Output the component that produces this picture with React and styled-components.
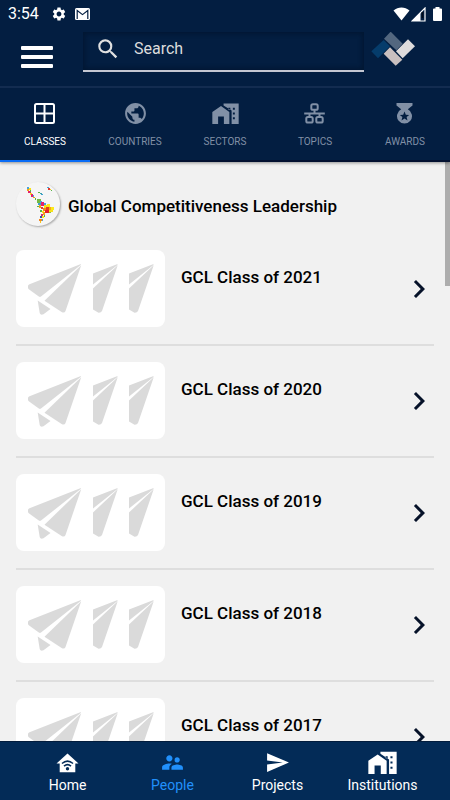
import styled, { createGlobalStyle } from "styled-components";
import { useState } from "react";
import {
  MdChevronRight,
  MdPublic,
  MdSearch,
  MdSend,
  MdSettings,
  MdSupervisorAccount,
} from "react-icons/md";

const GlobalStyle = createGlobalStyle`
  * {
    box-sizing: border-box;
  }
  body {
    margin: 0;
    font-family: Roboto, "Liberation Sans", sans-serif;
    background-color: #f1f1f1;
  }
  button {
    font-family: inherit;
    background: none;
    border: none;
    padding: 0;
    cursor: pointer;
  }
  svg {
    display: block;
    flex-shrink: 0;
  }
`;

const Screen = styled.div`
  height: 100vh;
  display: flex;
  flex-direction: column;
  overflow: hidden;
`;

const Top = styled.div`
  background-color: #031e41;
  color: white;
  position: relative;
  z-index: 1;
  box-shadow: 0 1px 3px rgba(0, 0, 0, 0.4);
`;

const StatusBar = styled.div`
  height: 28px;
  display: flex;
  align-items: center;
  padding: 0 8px;
  gap: 8px;
`;

const Clock = styled.span`
  font-size: 16px;
  line-height: 20px;
  margin-right: 4px;
`;

const Signals = styled.div`
  display: flex;
  align-items: center;
  gap: 1px;
  margin-left: auto;
`;

const Header = styled.header`
  display: flex;
  align-items: flex-start;
  padding: 4px 32px 14px 21px;
  border-bottom: 2px solid #132c50;
`;

const MenuButton = styled.button`
  width: 32px;
  margin-top: 14px;
  display: flex;
  flex-direction: column;
  gap: 5px;
`;

const Bar = styled.span`
  height: 4px;
  width: 100%;
  border-radius: 1px;
  background-color: white;
`;

const SearchBox = styled.label`
  flex: 1;
  min-width: 0;
  height: 40px;
  margin: 0 7px 0 30px;
  padding: 0 12px 4px;
  display: flex;
  align-items: center;
  gap: 13px;
  color: #e0e0e0;
  border-bottom: 2px solid #c4c7d2;
  box-shadow: inset 0 0 4px 2px #021733;
`;

const SearchInput = styled.input`
  flex: 1;
  min-width: 0;
  padding: 0;
  border: none;
  outline: none;
  background: none;
  color: inherit;
  font-family: inherit;
  font-size: 16px;
  line-height: 20px;
  &::placeholder {
    color: #dcdcdc;
    opacity: 1;
  }
`;

const Tabs = styled.div`
  display: flex;
`;

const Tab = styled.button`
  flex: 1 1 0;
  min-width: 0;
  height: 74px;
  display: flex;
  flex-direction: column;
  align-items: center;
  padding-top: 13px;
  gap: 9px;
  font-size: 10px;
  line-height: 14px;
  color: ${(props) => (props.$active ? "white" : "#8190a6")};
  border-bottom: 2px solid ${(props) => (props.$active ? "#0a6cf5" : "#031131")};
`;

const Main = styled.main`
  flex: 1;
  min-height: 0;
  position: relative;
`;

const Scroller = styled.div`
  height: 100%;
  overflow-y: auto;
  padding: 20px 16px 0;
  scrollbar-width: none;
`;

const ScrollThumb = styled.div`
  position: absolute;
  top: 0;
  right: 0;
  width: 5px;
  height: 124px;
  background-color: #adadad;
`;

const Group = styled.div`
  display: flex;
  align-items: center;
  gap: 8px;
  margin-bottom: 8px;
`;

const GroupTitle = styled.h1`
  margin: 0;
  padding-top: 3px;
  font-size: 17px;
  line-height: 20px;
  font-weight: 500;
  color: #000;
`;

const Avatar = styled.span`
  width: 44px;
  height: 44px;
  border-radius: 50%;
  background-color: #f5f5f5;
  box-shadow: 1px 1px 2px rgba(0, 0, 0, 0.3);
`;

const List = styled.ul`
  list-style: none;
  margin: 0;
  padding: 0;
`;

const Item = styled.li`
  border-bottom: 2px solid #dedede;
`;

const ItemLink = styled.a`
  display: flex;
  align-items: center;
  gap: 16px;
  padding: 16px 0 17px;
  color: #000;
  text-decoration: none;
`;

const Thumb = styled.span`
  width: 149px;
  height: 77px;
  border-radius: 8px;
  background-color: white;
  flex-shrink: 0;
`;

const ItemName = styled.span`
  flex: 1;
  align-self: flex-start;
  padding-top: 15px;
  font-size: 17px;
  line-height: 24px;
  font-weight: 500;
`;

const Chevron = styled(MdChevronRight)`
  color: #061229;
  margin-right: -3px;
`;

const BottomNav = styled.nav`
  display: flex;
  padding: 0 15px;
  height: 59px;
  background-color: #032b57;
  border-top: 1px solid #021c3c;
`;

const NavLink = styled.a`
  flex: 1 1 0;
  display: flex;
  flex-direction: column;
  align-items: center;
  padding-top: 8px;
  font-size: 14px;
  line-height: 20px;
  text-decoration: none;
  color: ${(props) => (props.$active ? "#2190fb" : "white")};
`;

const MailIcon = () => (
  <svg width="15" height="12" viewBox="0 0 15 12">
    <rect width="15" height="12" rx="1.5" fill="#fff" />
    <path d="M2.2 11V2.5L7.5 6.6L12.8 2.5V11" fill="none" stroke="#031e41" strokeWidth="1.2" />
  </svg>
);

const WifiIcon = () => (
  <svg width="17" height="14" viewBox="0 0 16 14" fill="#fff">
    <path d="M0 3.6C4.6-.6 11.4-.6 16 3.6L8 13.6Z" />
  </svg>
);

const SignalIcon = () => (
  <svg width="15" height="15" viewBox="0 0 15 15">
    <path d="M14 1V14H1Z" fill="none" stroke="#fff" strokeWidth="1.2" />
    <path d="M9.5 5.5V14H1Z" fill="#fff" />
    <path d="M11.5 5V11" stroke="#020a18" strokeWidth="1.6" />
  </svg>
);

const BatteryIcon = () => (
  <svg width="15" height="14" viewBox="-6 0 15 14" fill="#fff">
    <path d="M2.5 0H6.5V1.5H8Q9 1.5 9 2.5V13Q9 14 8 14H1Q0 14 0 13V2.5Q0 1.5 1 1.5H2.5Z" />
  </svg>
);

const BrandLogo = () => (
  <svg width="47" height="37" viewBox="438 95 141 111">
    <path d="M439 153L476 119L495 138L459 174Z" fill="#053c6b" />
    <path d="M497 94L533 130L514 150L477 115Z" fill="#53677f" />
    <path d="M495 141L532 178L512 196L476 160Z" fill="#c9c0c0" />
    <path d="M549 117L570 138L533 174L513 153Z" fill="#dedbdb" />
  </svg>
);

const GridIcon = () => (
  <svg width="27" height="25" viewBox="0 0 27 25" fill="none" stroke="currentColor" strokeWidth="2">
    <rect x="3" y="3" width="19" height="19" rx="1.5" />
    <path d="M12.5 3V22M3 12.5H22" />
  </svg>
);

const TopicsIcon = () => (
  <svg width="27" height="25" viewBox="0 0 27 25" fill="none" stroke="currentColor" strokeWidth="2">
    <rect x="9.3" y="3.2" width="6.4" height="5.6" rx="1.6" />
    <rect x="4.3" y="16" width="6.4" height="5.6" rx="1.6" />
    <rect x="14.3" y="16" width="6.4" height="5.6" rx="1.6" />
    <path d="M12.5 9V12.5M2.2 12.5H22.8M7.5 12.5V16M17.5 12.5V16" />
  </svg>
);

const MedalIcon = () => (
  <svg width="27" height="25" viewBox="0 0 27 25" fill="currentColor">
    <path
      d="M4.5 2H20.5V4.5L15.8 8.3A7.5 7.5 0 1 1 9.2 8.3L4.5 4.5ZM12.5 10.4L11.2 13.7L7.8 13.9L10.4 16.1L9.5 19.4L12.5 17.6L15.5 19.4L14.6 16.1L17.2 13.9L13.8 13.7Z"
      fillRule="evenodd"
    />
  </svg>
);

const HomeCityIcon = ({ width, height }) => (
  <svg width={width} height={height} viewBox="-1 -4 84 70" fill="currentColor">
    <path d="M0 64V26L27 8L53 26V64H36V40H18V64Z" />
    <path
      d="M35 0H82V64H60V22L35 6ZM50 13V19H56V13ZM64 13V19H70V13ZM64 28V34H70V28ZM64 43V49H70V43Z"
      fillRule="evenodd"
    />
  </svg>
);

const HomeWifiIcon = () => (
  <svg width="25" height="25" viewBox="0 0 25 25">
    <path d="M12.5 3.5L23.5 13.5H20.3V22.3H4.7V13.5H1.5Z" fill="currentColor" />
    <g fill="none" stroke="#032b57" strokeWidth="1.6">
      <path d="M7 13.5Q12.5 8.8 18 13.5" />
      <path d="M9 16.2Q12.5 13.2 16 16.2" />
    </g>
    <circle cx="12.5" cy="18.8" r="1.7" fill="#032b57" />
  </svg>
);

const half =
  "M77 23.5L101 14.3Q102 14.2 101.5 15L77 34.5ZM77 38.5L101.7 15.2L86 61Q85 63 82.5 62.8L77 59.5Z";

const PlanesIcon = () => (
  <svg width="149" height="77" viewBox="0 0 149 77" fill="#dadada">
    <path d="M13.5 34.2L64.3 14.2Q65.5 14 64.7 15L25 46.5Q24 47.3 22.8 46.5L12.8 39.2Q12 38.5 12 37.5V36Q12 35 13.5 34.2Z" />
    <path d="M65.2 15.2L49.5 61Q48.5 63.3 46 62.3L28.5 50.7Z" />
    <path d="M21.7 50.5L34.5 59L27.5 64.3Q24.5 65.5 23.7 63Z" />
    <path d={half} />
    <path d={half} transform="translate(36 0)" />
  </svg>
);

// x, y, width, height, colour of each tile of the map
const tiles = [
  [11, 5, 2, 2, "#4aa3d8"], [13, 6, 2, 2, "#f6e21a"], [11, 7, 2, 2, "#f3a01c"],
  [12, 9, 3, 2, "#e4206c"], [14, 8, 1, 2, "#58b548"], [14, 11, 2, 2, "#f6e21a"],
  [15, 12, 2, 3, "#e4206c"], [17, 13, 1, 2, "#4aa3d8"], [17, 15, 2, 1, "#f3a01c"],
  [19, 16, 1, 2, "#58b548"], [22, 10, 2, 1, "#58b548"], [24, 11, 2, 1, "#39a0a8"],
  [25, 12, 2, 1, "#3ba0cf"], [31, 5, 2, 1, "#4aa3d8"], [32, 6, 2, 2, "#e23a2e"],
  [34, 7, 1, 1, "#f6c81a"], [35, 8, 1, 1, "#58b548"],
  [21, 17, 4, 4, "#75b843"], [24, 19, 2, 2, "#4aa3d8"], [22, 21, 3, 2, "#3ba0cf"],
  [25, 20, 3, 4, "#e4206c"], [23, 23, 2, 3, "#f3a01c"], [28, 21, 2, 2, "#4aa3d8"],
  [21, 24, 2, 1, "#58b548"], [28, 23, 3, 3, "#f6e21a"], [31, 22, 3, 3, "#fbe91a"],
  [33, 25, 2, 3, "#f6a81a"], [35, 25, 3, 3, "#fbe91a"], [30, 25, 3, 3, "#e4401c"],
  [27, 26, 3, 3, "#f3871c"], [25, 25, 2, 2, "#e23a2e"], [24, 28, 2, 2, "#58b548"],
  [29, 28, 4, 3, "#e4202c"], [33, 28, 4, 2, "#f6e21a"], [26, 29, 2, 2, "#fbe91a"],
  [33, 30, 2, 1, "#8bbf3d"], [25, 32, 2, 2, "#d8306c"], [27, 30, 2, 3, "#f3a01c"],
  [24, 34, 2, 2, "#3457a8"], [26, 34, 2, 2, "#fbe91a"], [28, 33, 1, 2, "#58b548"],
  [23, 37, 3, 2, "#f3871c"], [24, 39, 1, 2, "#f6c81a"], [26, 37, 1, 2, "#4aa3d8"],
];

const MapIcon = () => (
  <svg width="44" height="44" viewBox="0 0 44 44">
    {tiles.map(([x, y, w, h, color]) => (
      <rect key={`${x}-${y}`} x={x} y={y} width={w} height={h} fill={color} />
    ))}
  </svg>
);

const tabs = [
  { name: "CLASSES", icon: <GridIcon /> },
  { name: "COUNTRIES", icon: <MdPublic size={25} /> },
  { name: "SECTORS", icon: <HomeCityIcon width={27} height={25} /> },
  { name: "TOPICS", icon: <TopicsIcon /> },
  { name: "AWARDS", icon: <MedalIcon /> },
];

const years = [2021, 2020, 2019, 2018, 2017];

const pages = [
  { name: "Home", icon: <HomeWifiIcon /> },
  { name: "People", icon: <MdSupervisorAccount size={25} /> },
  { name: "Projects", icon: <MdSend size={25} /> },
  { name: "Institutions", icon: <HomeCityIcon width={29} height={25} /> },
];

const App = () => {
  const [tab, setTab] = useState("CLASSES");
  const [search, setSearch] = useState("");

  return (
    <Screen>
      <GlobalStyle />
      <Top>
        <StatusBar>
          <Clock>3:54</Clock>
          <MdSettings size={16} />
          <MailIcon />
          <Signals>
            <WifiIcon />
            <SignalIcon />
            <BatteryIcon />
          </Signals>
        </StatusBar>
        <Header>
          <MenuButton aria-label="Menu">
            <Bar />
            <Bar />
            <Bar />
          </MenuButton>
          <SearchBox>
            <MdSearch size={26} />
            <SearchInput
              type="text"
              aria-label="Search"
              placeholder="Search"
              value={search}
              onChange={(e) => setSearch(e.target.value)}
            />
          </SearchBox>
          <BrandLogo />
        </Header>
        <Tabs role="tablist">
          {tabs.map((item) => (
            <Tab
              key={item.name}
              role="tab"
              aria-selected={tab === item.name}
              $active={tab === item.name}
              onClick={() => setTab(item.name)}
            >
              {item.icon}
              {item.name}
            </Tab>
          ))}
        </Tabs>
      </Top>
      <Main>
        <Scroller>
          <Group>
            <Avatar>
              <MapIcon />
            </Avatar>
            <GroupTitle>Global Competitiveness Leadership</GroupTitle>
          </Group>
          <List>
            {years.map((year) => (
              <Item key={year}>
                <ItemLink href="#">
                  <Thumb>
                    <PlanesIcon />
                  </Thumb>
                  <ItemName>GCL Class of {year}</ItemName>
                  <Chevron size={36} />
                </ItemLink>
              </Item>
            ))}
          </List>
        </Scroller>
        <ScrollThumb />
      </Main>
      <BottomNav>
        {pages.map((page) => (
          <NavLink key={page.name} href="#" $active={page.name === "People"}>
            {page.icon}
            {page.name}
          </NavLink>
        ))}
      </BottomNav>
    </Screen>
  );
};

export default App;
